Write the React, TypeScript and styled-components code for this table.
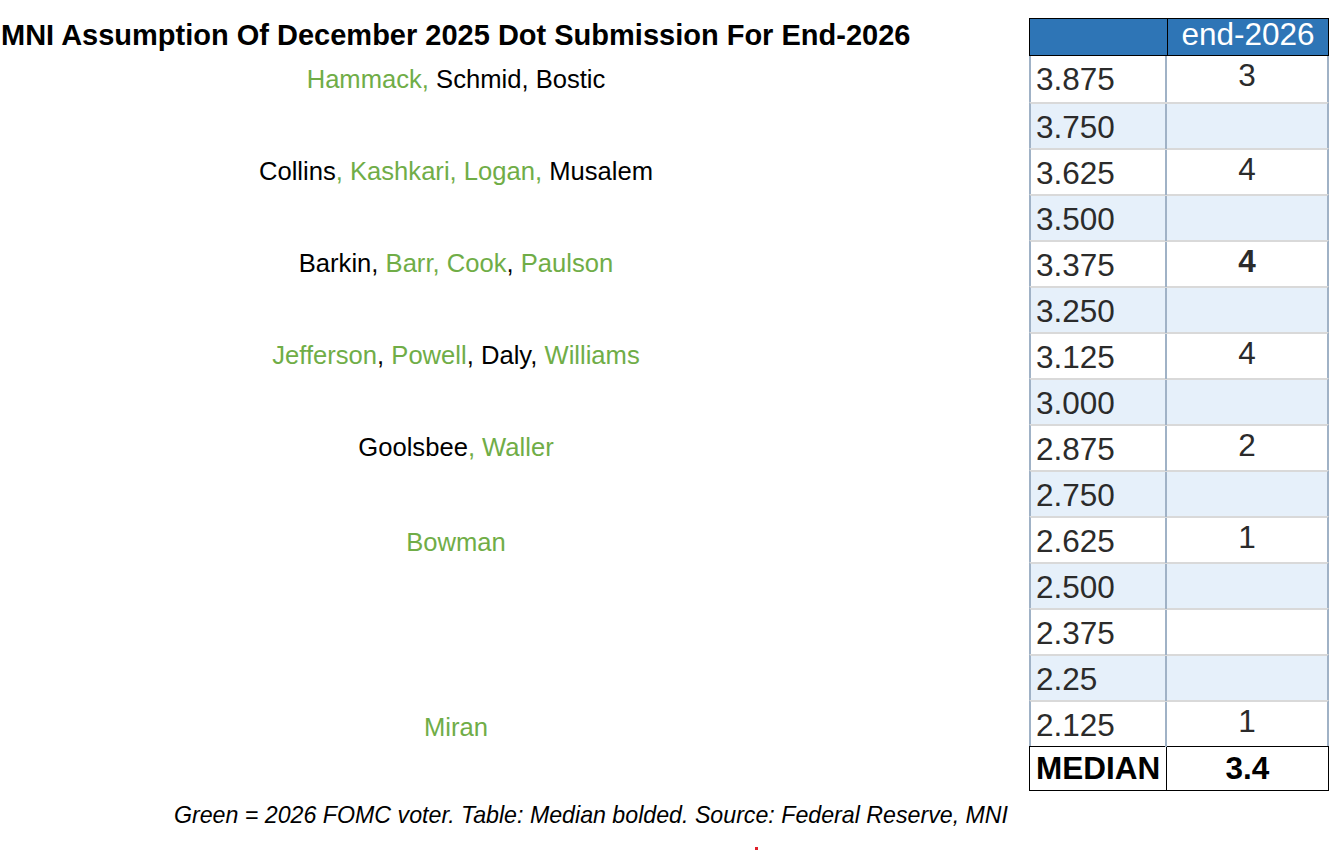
import {createGlobalStyle} from 'styled-components'
import styled from 'styled-components'

const GREEN = '#70ad47'

const GlobalStyle = createGlobalStyle`
  body {
    margin: 0;
    background: #fff;
    font-family: 'Liberation Sans', Arial, sans-serif;
    color: #000;
  }
`

const Page = styled.div`
  display: flex;
  flex-direction: column;
  width: 1340px;
`

const Main = styled.div`
  display: flex;
  align-items: flex-start;
`

const Chart = styled.div`
  width: 912px;
  display: flex;
  flex-direction: column;
`

const Title = styled.h1`
  margin: 0;
  height: 56px;
  box-sizing: border-box;
  padding: 19px 0 0 1px;
  font-size: 29px;
  line-height: 32px;
  font-weight: 700;
  white-space: nowrap;
`

const NameRow = styled.div<{$shift?: number}>`
  height: 46px;
  box-sizing: border-box;
  padding-top: ${p => p.$shift || 0}px;
  line-height: 46px;
  font-size: 25.6px;
  text-align: center;
  white-space: nowrap;
`

const Name = styled.span<{$voter?: boolean}>`
  color: ${p => (p.$voter ? GREEN : '#000')};
`

const Table = styled.div`
  width: 300px;
  margin: 18px 0 0 117px;
  font-size: 31.5px;
  color: #2b2b2b;
`

const HeaderRow = styled.div`
  display: grid;
  grid-template-columns: 137px 1fr;
  height: 38px;
  box-sizing: border-box;
  background: #2e75b6;
  border: 1px solid #000;
`

const HeaderCell = styled.div`
  line-height: 30px;
  color: #fff;
  text-align: center;
  & + & {
    border-left: 1px solid #000;
  }
`

const Row = styled.div<{$shade: boolean}>`
  display: grid;
  grid-template-columns: 136px 1fr;
  height: 46px;
  box-sizing: border-box;
  background: ${p => (p.$shade ? '#e6f0fa' : '#fff')};
  border-left: 2px solid #a0b2c6;
  border-right: 2px solid #a0b2c6;
  & + & {
    border-top: 2px solid #d9d9d9;
  }
`

const RateCell = styled.div`
  line-height: 44px;
  padding: 1px 0 0 5px;
  border-right: 2px solid #a0b2c6;
`

const CountCell = styled.div<{$bold?: boolean}>`
  line-height: 38px;
  text-align: center;
  font-weight: ${p => (p.$bold ? 700 : 400)};
`

const MedianRow = styled.div`
  display: grid;
  grid-template-columns: 137px 1fr;
  height: 45px;
  box-sizing: border-box;
  border: 1px solid #000;
  font-weight: 700;
  color: #000;
  line-height: 43px;
`

const MedianLabel = styled.div`
  padding-left: 6px;
  border-right: 1px solid #000;
`

const MedianValue = styled.div`
  text-align: center;
`

const Footer = styled.p`
  margin: 10px 0 0;
  width: 1182px;
  font-size: 23.2px;
  line-height: 28px;
  font-style: italic;
  text-align: center;
  white-space: nowrap;
`

const Mark = styled.div`
  width: 3px;
  height: 3px;
  margin: 18px 0 0 755px;
  background: #e0202a;
`

type Part = [string, boolean?]

const names: {row: number; shift?: number; parts: Part[]}[] = [
  {row: 0, parts: [['Hammack,', true], [' Schmid, Bostic']]},
  {row: 2, parts: [['Collins'], [', Kashkari, Logan,', true], [' Musalem']]},
  {row: 4, parts: [['Barkin, '], ['Barr, Cook', true], [', '], ['Paulson', true]]},
  {
    row: 6,
    parts: [['Jefferson', true], [', '], ['Powell', true], [', Daly, '], ['Williams', true]],
  },
  {row: 8, parts: [['Goolsbee'], [', Waller', true]]},
  {row: 10, shift: 3, parts: [['Bowman', true]]},
  {row: 14, shift: 4, parts: [['Miran', true]]},
]

const rates: [string, string, boolean?][] = [
  ['3.875', '3'],
  ['3.750', ''],
  ['3.625', '4'],
  ['3.500', ''],
  ['3.375', '4', true],
  ['3.250', ''],
  ['3.125', '4'],
  ['3.000', ''],
  ['2.875', '2'],
  ['2.750', ''],
  ['2.625', '1'],
  ['2.500', ''],
  ['2.375', ''],
  ['2.25', ''],
  ['2.125', '1'],
]

const App = () => (
  <Page>
    <GlobalStyle />
    <Main>
      <Chart>
        <Title>MNI Assumption Of December 2025 Dot Submission For End-2026</Title>
        {rates.map((_, i) => {
          const line = names.find(n => n.row === i)
          return (
            <NameRow key={i} $shift={line?.shift}>
              {line?.parts.map(([text, voter], j) => (
                <Name key={j} $voter={voter}>
                  {text}
                </Name>
              ))}
            </NameRow>
          )
        })}
      </Chart>
      <Table>
        <HeaderRow>
          <HeaderCell />
          <HeaderCell>end-2026</HeaderCell>
        </HeaderRow>
        {rates.map(([rate, count, bold], i) => (
          <Row key={rate} $shade={i % 2 === 1}>
            <RateCell>{rate}</RateCell>
            <CountCell $bold={bold}>{count}</CountCell>
          </Row>
        ))}
        <MedianRow>
          <MedianLabel>MEDIAN</MedianLabel>
          <MedianValue>3.4</MedianValue>
        </MedianRow>
      </Table>
    </Main>
    <Footer>Green = 2026 FOMC voter. Table: Median bolded. Source: Federal Reserve, MNI</Footer>
    <Mark />
  </Page>
)

App.displayName = 'App'
export default App
